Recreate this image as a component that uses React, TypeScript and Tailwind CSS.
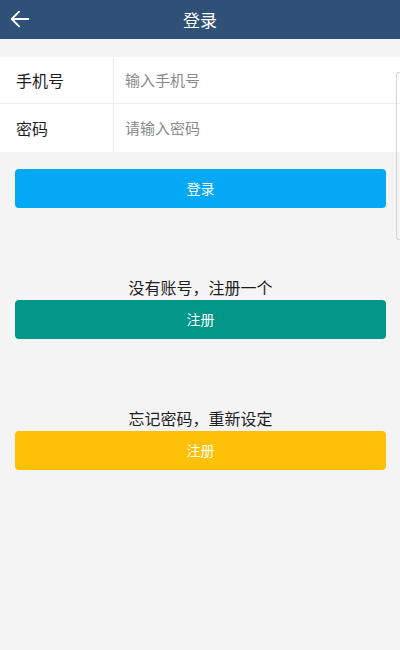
import React from 'react';

const font = { fontFamily: '"Noto Sans CJK SC", "Noto Sans", sans-serif' };

const App: React.FC = () => {
  return (
    <div className="min-h-[650px] w-[400px] bg-[#f4f4f4] relative" style={font}>
      <header className="h-[39px] bg-[#2f5077] flex items-center relative">
        <button className="absolute left-[9px] top-[8px] text-white">
          <svg width="22" height="22" viewBox="0 0 24 24" fill="none" stroke="currentColor" strokeWidth="2" strokeLinecap="round" strokeLinejoin="round">
            <path d="M21 12H3" />
            <path d="M11 4l-8 8 8 8" />
          </svg>
        </button>
        <h1 className="flex-1 text-center text-white text-[17px] leading-none">登录</h1>
      </header>

      <div className="mt-[18px] bg-white">
        <div className="flex h-[47px] border-b border-[#ececec]">
          <label className="w-[114px] pl-4 flex items-center text-[16px] text-[#1e1e1e] border-r border-[#eeeeee]">手机号</label>
          <input
            className="flex-1 pl-[11px] text-[15px] text-[#333] placeholder-[#8a8a8a] outline-none bg-transparent"
            placeholder="输入手机号"
          />
        </div>
        <div className="flex h-[48px]">
          <label className="w-[114px] pl-4 flex items-center text-[16px] text-[#1e1e1e] border-r border-[#eeeeee]">密码</label>
          <input
            type="password"
            className="flex-1 pl-[11px] text-[15px] text-[#333] placeholder-[#8a8a8a] outline-none bg-transparent"
            placeholder="请输入密码"
          />
        </div>
      </div>

      <div className="px-[15px] pr-[14px]">
        <button className="mt-[17px] w-full h-[39px] rounded-[4px] bg-[#03a9f4] text-white text-[14px]">登录</button>

        <p className="mt-[69px] text-center text-[16px] leading-[20px] text-[#1e1e1e]">没有账号，注册一个</p>
        <button className="mt-[3px] w-full h-[39px] rounded-[4px] bg-[#009688] text-white text-[14px]">注册</button>

        <p className="mt-[69px] text-center text-[16px] leading-[20px] text-[#1e1e1e]">忘记密码，重新设定</p>
        <button className="mt-[3px] w-full h-[39px] rounded-[4px] bg-[#ffc107] text-white text-[14px]">注册</button>
      </div>

      <div className="absolute right-0 top-[72px] w-[4px] h-[168px] rounded-l-[3px] border border-r-0 border-[#d4d4d4]" />
    </div>
  );
};

export default App;
